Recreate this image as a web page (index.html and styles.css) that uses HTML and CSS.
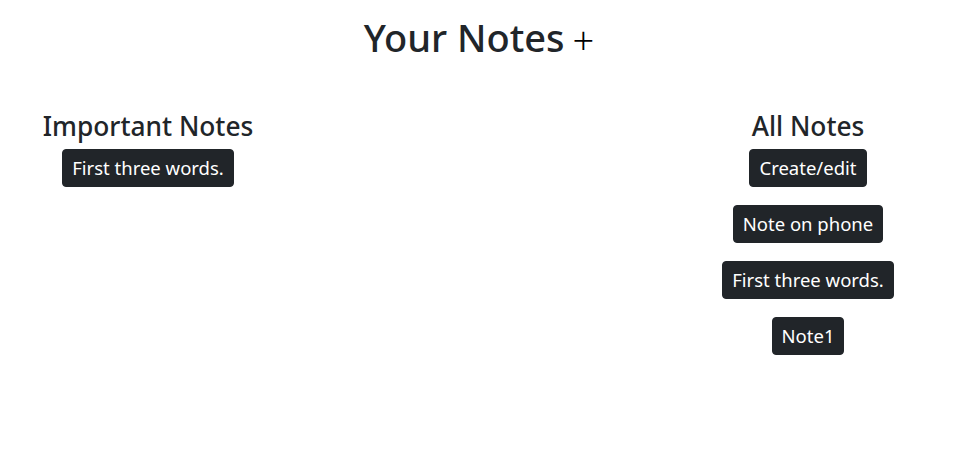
FILE: index.html
```html
<!DOCTYPE html>
<html lang="en">
<head>
<meta charset="utf-8">
<title>Your Notes</title>
<link rel="stylesheet" href="styles.css">
</head>
<body>
  <header class="page-header">
    <h1 class="title">Your Notes<span class="add">+</span></h1>
  </header>
  <main class="columns">
    <section class="column column-left">
      <h3 class="column-title">Important Notes</h3>
      <div class="note-list">
        <button class="note-btn">First three words.</button>
      </div>
    </section>
    <div class="spacer"></div>
    <section class="column column-right">
      <h3 class="column-title">All Notes</h3>
      <div class="note-list">
        <button class="note-btn">Create/edit</button>
        <button class="note-btn">Note on phone</button>
        <button class="note-btn">First three words.</button>
        <button class="note-btn">Note1</button>
      </div>
    </section>
  </main>
</body>
</html>
```

FILE: styles.css
```css
html, body {
  margin: 0;
  padding: 0;
  background: #ffffff;
}
body {
  font-family: "Noto Sans", "Open Sans", sans-serif;
  color: #212529;
  font-size: 16px;
  line-height: 1.5;
}
.page-header {
  padding-top: 13px;
  text-align: center;
}
.title {
  margin: 0 0 48px 0;
  font-size: 38px;
  font-weight: 500;
  line-height: 48px;
  padding-right: 12px;
}
.add {
  display: inline-block;
  margin-left: 8px;
  font-size: 38px;
  font-weight: 300;
  color: #000;
  position: relative;
  top: 3px;
}
.columns {
  display: grid;
  grid-template-columns: 296px 1fr 324px;
}
.column {
  display: flex;
  flex-direction: column;
  align-items: center;
}
.column-title {
  margin: 0 0 6px 0;
  font-size: 26.3px;
  font-weight: 500;
  line-height: 34px;
}
.note-list {
  display: flex;
  flex-direction: column;
  align-items: center;
  gap: 18px;
}
.note-btn {
  font-family: inherit;
  font-size: 18.5px;
  line-height: 22px;
  padding: 7px 9px;
  color: #fff;
  background: #212529;
  border: 1px solid #212529;
  border-radius: 4px;
}
```
